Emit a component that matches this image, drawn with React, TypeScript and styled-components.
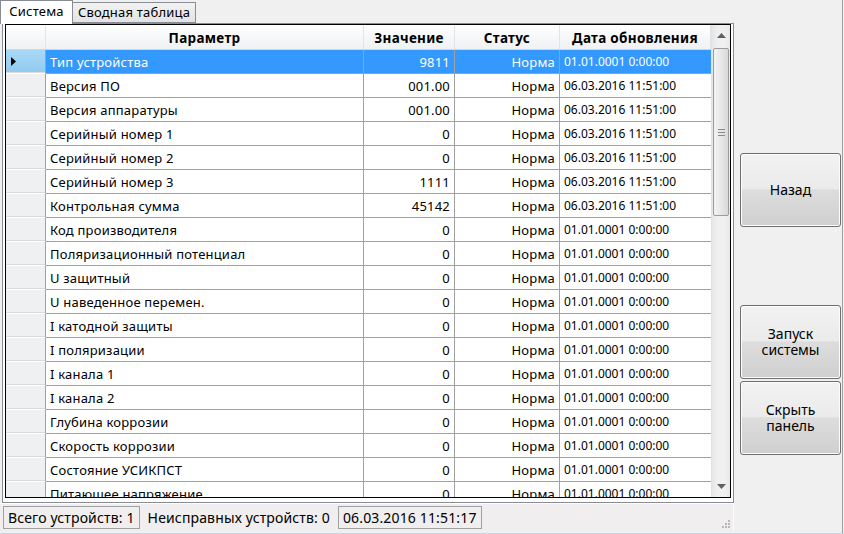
import React from "react";
import styled, { createGlobalStyle } from "styled-components";

const Global = createGlobalStyle`
  html, body { margin: 0; padding: 0; background: #f0f0f0; }
  body { font-family: "Noto Sans", "Open Sans", sans-serif; font-size: 12px; color: #000; }
`;

const Root = styled.div`
  width: 844px;
  height: 534px;
  display: flex;
  box-sizing: border-box;
  border-bottom: 1px solid #c9d5e4;
  overflow: hidden;
`;

const LeftPane = styled.div`
  width: 734px;
  display: flex;
  flex-direction: column;
  box-sizing: border-box;
  padding-left: 2px;
`;

const TabStrip = styled.div`
  height: 23px;
  display: flex;
  align-items: flex-end;
  position: relative;
  z-index: 2;
  margin-left: -2px;
`;

const Tab = styled.div<{ $active?: boolean }>`
  box-sizing: border-box;
  border: 1px solid #898c95;
  border-bottom: ${(p) => (p.$active ? "none" : "1px solid #898c95")};
  background: ${(p) => (p.$active ? "#fff" : "linear-gradient(#f2f2f2, #e3e3e3)")};
  height: ${(p) => (p.$active ? "24px" : "21px")};
  margin-bottom: ${(p) => (p.$active ? "-1px" : "0")};
  margin-left: ${(p) => (p.$active ? "0" : "-1px")};
  width: ${(p) => (p.$active ? "73px" : "124px")};
  padding: ${(p) => (p.$active ? "2px 0 0 0" : "1px 0 0 0")};
  text-align: center;
  font-size: 13px;
  letter-spacing: 0.2px;
  line-height: 17px;
  white-space: nowrap;
`;

const TabPage = styled.div`
  box-sizing: border-box;
  width: 732px;
  height: 480px;
  border: 1px solid #898c95;
  background: #fff;
  padding: 0 2px 4px 2px;
  display: flex;
`;

const GridFrame = styled.div`
  flex: 1;
  border: 1px solid #000;
  display: flex;
  overflow: hidden;
  background: #fff;
`;

const GridBody = styled.div`
  width: 705px;
  overflow: hidden;
`;

const COLS = "40px 318px 91px 105px 151px";

const HeaderRow = styled.div`
  display: grid;
  grid-template-columns: ${COLS};
  height: 25px;
  box-sizing: border-box;
  background: linear-gradient(#ffffff 0%, #f7f8fa 50%, #f0f1f3 100%);
  border-bottom: 1px solid #d5d5d5;
`;

const HeaderCell = styled.div`
  box-sizing: border-box;
  border-right: 1px solid #e3e4e6;
  font-weight: bold;
  font-size: 13.5px;
  letter-spacing: 0.3px;
  display: flex;
  align-items: center;
  justify-content: center;
  padding-top: 1px;
  white-space: nowrap;
`;

const Row = styled.div`
  display: grid;
  grid-template-columns: ${COLS};
  height: 24px;
`;

const RowHeader = styled.div<{ $selected?: boolean }>`
  box-sizing: border-box;
  border-right: 1px solid #a0a0a0;
  border-bottom: 1px solid #ffffff;
  background: ${(p) => (p.$selected ? "linear-gradient(#a9d9f7, #8fcbef)" : "#eef0f2")};
  box-shadow: inset 0 -1px 0 #d9dbdd;
  display: flex;
  align-items: center;
  padding-left: 5px;
`;

const Cell = styled.div<{ $align?: "left" | "right"; $selected?: boolean; $last?: boolean }>`
  box-sizing: border-box;
  border-right: ${(p) => (p.$last ? "none" : "1px solid #a0a0a0")};
  border-bottom: 1px solid #a0a0a0;
  background: ${(p) => (p.$selected ? "#3399ff" : "#fff")};
  color: ${(p) => (p.$selected ? "#fff" : "#000")};
  display: flex;
  align-items: center;
  justify-content: ${(p) => (p.$align === "right" ? "flex-end" : "flex-start")};
  padding: ${(p) => (p.$align === "right" ? "0 4px 0 0" : "0 0 0 4px")};
  font-size: ${(p) => (p.$last ? "12px" : "13px")};
  letter-spacing: ${(p) => (p.$last ? "0" : "0.2px")};
  white-space: nowrap;
  overflow: hidden;
`;

const Scrollbar = styled.div`
  width: 19px;
  display: flex;
  flex-direction: column;
  background: linear-gradient(90deg, #e6e6e6, #f0f0f0 30%, #f0f0f0 70%, #e8e8e8);
  border-left: 1px solid #e2e2e2;
  box-sizing: border-box;
`;

const ScrollButton = styled.div`
  height: 21px;
  display: flex;
  align-items: center;
  justify-content: center;
`;

const Thumb = styled.div`
  margin: 2px 1px 0 1px;
  height: 168px;
  box-sizing: border-box;
  border: 1px solid #9c9c9c;
  border-radius: 2px;
  background: linear-gradient(90deg, #f3f3f3, #e8e8e8 50%, #d9d9d9);
  display: flex;
  align-items: center;
  justify-content: center;
`;

const Spacer = styled.div`
  flex: 1;
`;

const StatusBar = styled.div`
  height: 28px;
  box-sizing: border-box;
  background: #f0eeee;
  border-top: 1px solid #ffffff;
  display: flex;
  align-items: center;
  padding-left: 3px;
  margin-left: -2px;
  width: 734px;
  position: relative;
  border-right: 1px solid #fcfcfc;
`;

const StatusPanel = styled.div<{ $bordered?: boolean }>`
  box-sizing: border-box;
  height: 23px;
  border: 1px solid ${(p) => (p.$bordered ? "#a0a0a0" : "transparent")};
  padding: 0 4px;
  margin-right: 3px;
  display: flex;
  align-items: center;
  font-size: 14px;
  letter-spacing: 0.15px;
  white-space: nowrap;
`;

const Grip = styled.svg`
  position: absolute;
  right: 2px;
  bottom: 2px;
`;

const RightPanel = styled.div`
  flex: 1;
  box-sizing: border-box;
  border-right: 1px solid #a0a0a0;
  margin-right: 1px;
  padding: 153px 0 0 6px;
  display: flex;
  flex-direction: column;
`;

const Button = styled.div<{ $gapTop?: number }>`
  width: 101px;
  height: 74px;
  box-sizing: border-box;
  margin-top: ${(p) => p.$gapTop ?? 0}px;
  border: 1px solid #707070;
  border-radius: 3px;
  background: linear-gradient(#f2f2f2 0%, #ebebeb 48%, #dddddd 50%, #cfcfcf 100%);
  box-shadow: inset 0 0 0 1px #fcfcfc;
  display: flex;
  flex-direction: column;
  align-items: center;
  justify-content: center;
  text-align: center;
  font-size: 14px;
`;

const ButtonLine = styled.span`
  display: block;
  height: 16px;
  line-height: 16px;
`;

type RowData = [string, string, string];

const D1 = "06.03.2016 11:51:00";
const D0 = "01.01.0001 0:00:00";

const rows: RowData[] = [
  ["Тип устройства", "9811", D0],
  ["Версия ПО", "001.00", D1],
  ["Версия аппаратуры", "001.00", D1],
  ["Серийный номер 1", "0", D1],
  ["Серийный номер 2", "0", D1],
  ["Серийный номер 3", "1111", D1],
  ["Контрольная сумма", "45142", D1],
  ["Код производителя", "0", D0],
  ["Поляризационный потенциал", "0", D0],
  ["U защитный", "0", D0],
  ["U наведенное перемен.", "0", D0],
  ["I катодной защиты", "0", D0],
  ["I поляризации", "0", D0],
  ["I канала 1", "0", D0],
  ["I канала 2", "0", D0],
  ["Глубина коррозии", "0", D0],
  ["Скорость коррозии", "0", D0],
  ["Состояние УСИКПСТ", "0", D0],
  ["Питающее напряжение", "0", D0],
];

export default function App() {
  return (
    <Root>
      <Global />
      <LeftPane>
        <TabStrip>
          <Tab $active>Система</Tab>
          <Tab>Сводная таблица</Tab>
        </TabStrip>
        <TabPage>
          <GridFrame>
            <GridBody>
              <HeaderRow>
                <HeaderCell />
                <HeaderCell>Параметр</HeaderCell>
                <HeaderCell>Значение</HeaderCell>
                <HeaderCell>Статус</HeaderCell>
                <HeaderCell>Дата обновления</HeaderCell>
              </HeaderRow>
              {rows.map(([name, value, date], i) => {
                const sel = i === 0;
                return (
                  <Row key={i}>
                    <RowHeader $selected={sel}>
                      {sel && (
                        <svg width="5" height="9" viewBox="0 0 5 9">
                          <path d="M0 0 L5 4.5 L0 9 Z" fill="#000" />
                        </svg>
                      )}
                    </RowHeader>
                    <Cell $selected={sel}>{name}</Cell>
                    <Cell $selected={sel} $align="right">{value}</Cell>
                    <Cell $selected={sel} $align="right">Норма</Cell>
                    <Cell $selected={sel} $last>{date}</Cell>
                  </Row>
                );
              })}
            </GridBody>
            <Scrollbar>
              <ScrollButton>
                <svg width="9" height="5" viewBox="0 0 9 5">
                  <path d="M0 5 L4.5 0 L9 5 Z" fill="#606060" />
                </svg>
              </ScrollButton>
              <Thumb>
                <svg width="7" height="7" viewBox="0 0 7 7">
                  <path d="M0 0.5 H7 M0 3.5 H7 M0 6.5 H7" stroke="#8a8a8a" strokeWidth="1" />
                </svg>
              </Thumb>
              <Spacer />
              <ScrollButton>
                <svg width="9" height="5" viewBox="0 0 9 5">
                  <path d="M0 0 L4.5 5 L9 0 Z" fill="#606060" />
                </svg>
              </ScrollButton>
            </Scrollbar>
          </GridFrame>
        </TabPage>
        <StatusBar>
          <StatusPanel $bordered>Всего устройств: 1</StatusPanel>
          <StatusPanel>Неисправных устройств: 0</StatusPanel>
          <StatusPanel $bordered>06.03.2016 11:51:17</StatusPanel>
          <Grip width="10" height="10" viewBox="0 0 10 10">
            <g fill="#b8b8b8">
              <rect x="7" y="1" width="2" height="2" />
              <rect x="4" y="4" width="2" height="2" />
              <rect x="7" y="4" width="2" height="2" />
              <rect x="1" y="7" width="2" height="2" />
              <rect x="4" y="7" width="2" height="2" />
              <rect x="7" y="7" width="2" height="2" />
            </g>
          </Grip>
        </StatusBar>
      </LeftPane>
      <RightPanel>
        <Button>
          <ButtonLine>Назад</ButtonLine>
        </Button>
        <Button $gapTop={78}>
          <ButtonLine>Запуск</ButtonLine>
          <ButtonLine>системы</ButtonLine>
        </Button>
        <Button $gapTop={2}>
          <ButtonLine>Скрыть</ButtonLine>
          <ButtonLine>панель</ButtonLine>
        </Button>
      </RightPanel>
    </Root>
  );
}
